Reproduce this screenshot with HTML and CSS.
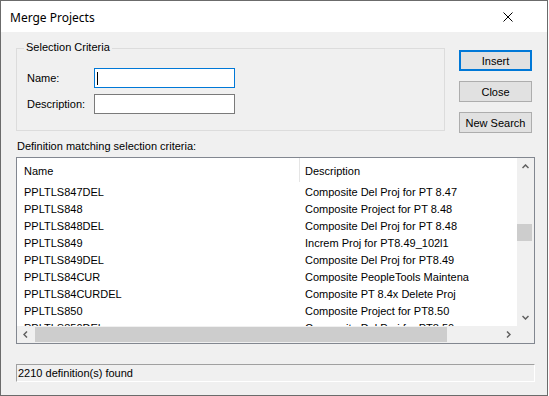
FILE: index.html
```html
<!DOCTYPE html>
<html lang="en">
<head>
    <meta charset="UTF-8">
    <title>Merge Projects</title>
    <link rel="stylesheet" href="styles.css">
</head>
<body>
    <div class="window">
        <div class="titlebar">
            <span class="title">Merge Projects</span>
            <svg class="close-x" width="10" height="10" viewBox="0 0 10 10">
                <path d="M0.5 0.5 L9.5 9.5 M9.5 0.5 L0.5 9.5" stroke="#000" stroke-width="1" fill="none"/>
            </svg>
        </div>

        <div class="dialog">
            <div class="top">
                <div class="group">
                    <span class="group-title">Selection Criteria</span>
                    <div class="field">
                        <label>Name:</label>
                        <div class="textbox focused"><span class="caret"></span></div>
                    </div>
                    <div class="field">
                        <label>Description:</label>
                        <div class="textbox"></div>
                    </div>
                </div>
                <div class="buttons">
                    <button class="btn default">Insert</button>
                    <button class="btn">Close</button>
                    <button class="btn">New Search</button>
                </div>
            </div>

            <div class="caption">Definition matching selection criteria:</div>

            <div class="list">
                <div class="list-view">
                    <div class="row header">
                        <span class="col-name">Name</span>
                        <span class="col-desc">Description</span>
                    </div>
                    <div id="rows"></div>
                </div>
                <div class="vscroll">
                    <div class="arrow">
                        <svg width="7" height="5" viewBox="0 0 7 5"><path d="M0.5 4 L3.5 1 L6.5 4" stroke="#606060" stroke-width="1.5" fill="none"/></svg>
                    </div>
                    <div class="track">
                        <div class="thumb-v"></div>
                    </div>
                    <div class="arrow">
                        <svg width="7" height="5" viewBox="0 0 7 5"><path d="M0.5 1 L3.5 4 L6.5 1" stroke="#606060" stroke-width="1.5" fill="none"/></svg>
                    </div>
                </div>
                <div class="hscroll">
                    <div class="arrow">
                        <svg width="5" height="7" viewBox="0 0 5 7"><path d="M4 0.5 L1 3.5 L4 6.5" stroke="#606060" stroke-width="1.5" fill="none"/></svg>
                    </div>
                    <div class="track">
                        <div class="thumb-h"></div>
                    </div>
                    <div class="arrow">
                        <svg width="5" height="7" viewBox="0 0 5 7"><path d="M1 0.5 L4 3.5 L1 6.5" stroke="#606060" stroke-width="1.5" fill="none"/></svg>
                    </div>
                </div>
                <div class="corner"></div>
            </div>

            <div class="statusbar">2210 definition(s) found</div>
        </div>
    </div>

    <script>
        // Project definitions shown in the list
        const projects = [
            ['PPLTLS847DEL', 'Composite Del Proj for PT 8.47'],
            ['PPLTLS848', 'Composite Project for PT 8.48'],
            ['PPLTLS848DEL', 'Composite Del Proj for PT 8.48'],
            ['PPLTLS849', 'Increm Proj for PT8.49_102l1'],
            ['PPLTLS849DEL', 'Composite Del Proj for PT8.49'],
            ['PPLTLS84CUR', 'Composite PeopleTools Maintenance'],
            ['PPLTLS84CURDEL', 'Composite PT 8.4x Delete Proj'],
            ['PPLTLS850', 'Composite Project for PT8.50'],
            ['PPLTLS850DEL', 'Composite Del Proj for PT8.50']
        ];

        const rowsContainer = document.getElementById('rows');
        projects.forEach(([name, desc]) => {
            const row = document.createElement('div');
            row.className = 'row';
            row.innerHTML = `<span class="col-name">${name}</span><span class="col-desc">${desc}</span>`;
            rowsContainer.appendChild(row);
        });
    </script>
</body>
</html>
```

FILE: styles.css
```css
body {
    margin: 0;
    background-color: #ffffff;
    font-family: "Liberation Sans", Arial, sans-serif;
    font-size: 11px;
    color: #000;
}
.window {
    width: 548px;
    height: 396px;
    box-sizing: border-box;
    border: 1px solid #6b6b6b;
    display: flex;
    flex-direction: column;
}
.titlebar {
    height: 31px;
    background-color: #ffffff;
    display: flex;
    align-items: center;
    justify-content: space-between;
    padding: 0 34px 0 9px;
    flex-shrink: 0;
}
.title {
    font-family: "Noto Sans", "Open Sans", sans-serif;
    font-size: 12px;
    margin-top: 1px;
}
.close-x {
    margin-top: 1px;
}
.dialog {
    flex: 1;
    background-color: #f0f0f0;
    padding: 16px 0 0 15px;
}
.top {
    display: flex;
    gap: 14px;
    align-items: flex-start;
}
.group {
    position: relative;
    width: 429px;
    height: 83px;
    box-sizing: border-box;
    border: 1px solid #dcdcdc;
    padding: 19px 0 0 10px;
}
.group-title {
    position: absolute;
    top: -8px;
    left: 7px;
    padding: 0 2px;
    line-height: 13px;
    background-color: #f0f0f0;
}
.field {
    display: flex;
    align-items: center;
    height: 20px;
}
.field + .field {
    margin-top: 6px;
}
.field label {
    width: 67px;
}
.textbox {
    width: 141px;
    height: 20px;
    box-sizing: border-box;
    border: 1px solid #7a7a7a;
    background-color: #ffffff;
    display: flex;
    align-items: center;
}
.textbox.focused {
    border-color: #0078d7;
}
.caret {
    width: 1px;
    height: 13px;
    margin-left: 2px;
    background-color: #000;
}
.buttons {
    display: flex;
    flex-direction: column;
    gap: 10px;
    margin-top: 2px;
}
.btn {
    width: 73px;
    height: 21px;
    box-sizing: border-box;
    background-color: #e1e1e1;
    border: 1px solid #adadad;
    font-family: "Liberation Sans", Arial, sans-serif;
    font-size: 11px;
    color: #000;
    padding: 0;
    margin: 0;
}
.btn.default {
    border: 2px solid #0078d7;
}
.caption {
    margin-top: 7px;
    line-height: 13px;
    padding-left: 1px;
}
.list {
    margin-top: 4px;
    width: 519px;
    height: 187px;
    box-sizing: border-box;
    border: 1px solid #828790;
    background-color: #ffffff;
    display: grid;
    grid-template-columns: 1fr 17px;
    grid-template-rows: 1fr 17px;
}
.list-view {
    overflow: hidden;
}
.row {
    display: flex;
    height: 17px;
    line-height: 17px;
    white-space: nowrap;
}
.row span {
    padding-top: 2px;
}
.row.header {
    height: 24px;
    line-height: 24px;
}
.col-name {
    width: 275px;
    padding-left: 7px;
    flex-shrink: 0;
}
.col-desc {
    width: 164px;
    padding-left: 6px;
    overflow: hidden;
}
.header .col-name {
    padding-top: 1px;
}
.header .col-desc {
    padding-left: 5px;
    padding-top: 1px;
    border-left: 1px solid #e5e5e5;
}
.vscroll {
    background-color: #f0f0f0;
    display: flex;
    flex-direction: column;
}
.hscroll {
    background-color: #f0f0f0;
    display: flex;
}
.arrow {
    width: 17px;
    height: 17px;
    display: flex;
    align-items: center;
    justify-content: center;
    flex-shrink: 0;
}
.track {
    flex: 1;
}
.thumb-v {
    width: 15px;
    height: 17px;
    margin: 49px 0 0 0;
    background-color: #cdcdcd;
}
.thumb-h {
    width: 412px;
    height: 15px;
    margin: 1px 0 0 1px;
    background-color: #cdcdcd;
}
.corner {
    background-color: #f0f0f0;
}
.statusbar {
    margin-top: 20px;
    width: 519px;
    height: 18px;
    box-sizing: border-box;
    border-top: 1px solid #a0a0a0;
    border-left: 1px solid #a0a0a0;
    border-right: 1px solid #ffffff;
    border-bottom: 1px solid #ffffff;
    line-height: 16px;
    padding-left: 1px;
}
```
